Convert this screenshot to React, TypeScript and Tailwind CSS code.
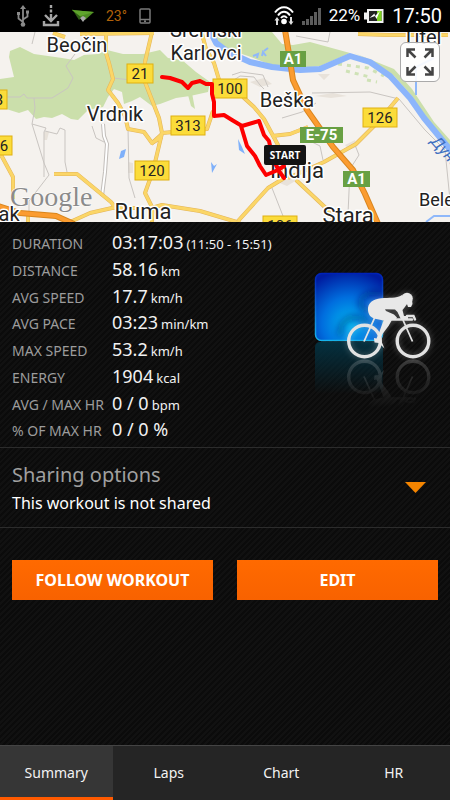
import { useState } from "react";

const STATS = [
  { label: "DURATION", value: "03:17:03", unit: "(11:50 - 15:51)" },
  { label: "DISTANCE", value: "58.16", unit: "km" },
  { label: "AVG SPEED", value: "17.7", unit: "km/h" },
  { label: "AVG PACE", value: "03:23", unit: "min/km" },
  { label: "MAX SPEED", value: "53.2", unit: "km/h" },
  { label: "ENERGY", value: "1904", unit: "kcal" },
  { label: "AVG / MAX HR", value: "0 / 0", unit: "bpm" },
  { label: "% OF MAX HR", value: "0 / 0 %", unit: "" },
];

const TABS = ["Summary", "Laps", "Chart", "HR"];

const PLACES = [
  { name: "Beočin", x: 77, y: 52 },
  { name: "Sremski", x: 206, y: 37 },
  { name: "Karlovci", x: 206, y: 60 },
  { name: "Vrdnik", x: 115, y: 121 },
  { name: "Beška", x: 287, y: 107 },
  { name: "Titel", x: 422, y: 44 },
  { name: "ak", x: 9, y: 221 },
];

const TOWNS = [
  { name: "Inđija", x: 297, y: 178 },
  { name: "Ruma", x: 143, y: 219 },
  { name: "Stara", x: 348, y: 223 },
];

const ROADS = [
  { no: "21", x: 127, y: 64, w: 26 },
  { no: "100", x: 213, y: 79, w: 34 },
  { no: "313", x: 171, y: 116, w: 34 },
  { no: "120", x: 135, y: 161, w: 34 },
  { no: "126", x: 363, y: 108, w: 34 },
  { no: "106", x: 263, y: 216, w: 34 },
  { no: "3", x: -20, y: 90, w: 27 },
  { no: "6", x: -20, y: 136, w: 32 },
];

const MOTORWAYS = [
  { no: "A1", x: 280, y: 51, w: 26 },
  { no: "E-75", x: 300, y: 127, w: 43 },
  { no: "A1", x: 343, y: 171, w: 27 },
];

function StatusBar() {
  return (
    <header className="flex h-8 items-center justify-between bg-black pl-4 pr-2 font-['Roboto',sans-serif] text-white">
      <div className="flex items-center gap-3">
        {/* usb */}
        <svg width="14" height="24" viewBox="0 0 14 24" fill="none" stroke="#8a8a8a" strokeWidth="1.8">
          <path d="M7 3v17M7 18L2.500 14.500V9M7 15.500l4.500-3V8" />
          <path d="M7 1l3 4H4zM1 8h3v3H1zM10 6.500h3v3h-3z" fill="#8a8a8a" stroke="none" />
          <circle cx="7" cy="20.500" r="2.300" fill="#8a8a8a" stroke="none" />
        </svg>
        {/* download */}
        <svg width="18" height="22" viewBox="0 0 18 22" fill="none" stroke="#a6a6a6" strokeWidth="2.400">
          <path d="M9 0v3M9 4.500v3M9 9v7M3 10l6 6 6-6M2 16v4h14v-4" />
        </svg>
        {/* paper plane */}
        <svg width="22" height="14" viewBox="0 0 22 14">
          <path d="M0 0l7 11 4-4z" fill="#2f5f14" />
          <path d="M0 1l22 2-9 8z" fill="#4d8a22" />
          <path d="M0 1l22 2-14 4z" fill="#5fa42c" />
          <path d="M8 9l3-2 3 2-3 4z" fill="#a8a8a8" />
        </svg>
        <span className="text-sm text-[#b0620a]">23°</span>
        <svg width="12" height="16" viewBox="0 0 12 16" fill="none" stroke="#7a7a7a" strokeWidth="1.500">
          <rect x="1" y="1" width="10" height="14" rx="1" />
          <path d="M1 11.500h10M5 13.300h2" />
        </svg>
      </div>
      <div className="flex items-center gap-2">
        {/* wifi */}
        <svg width="20" height="20" viewBox="0 0 20 20" fill="none" stroke="#fff" strokeWidth="2">
          <path d="M1 6.500C6-.500 14-.500 19 6.500M4 9.500c3.500-5 8.500-5 12 0M7 12c2-2.500 4-2.500 6 0" />
          <circle cx="10" cy="15.500" r="2.800" fill="#fff" stroke="none" />
          <path d="M3 11l2.500 3.500H4V19H2v-4.500H.500zM17 19l-2.500-3.500H16V11h2v4.500h1.500z" fill="#ddd" stroke="none" />
        </svg>
        {/* signal */}
        <svg width="19" height="17" viewBox="0 0 19 17" fill="#5c5c5c">
          <path d="M0 13h3v4H0zM4 11h3v6H4zM8 8h3v9H8zM12 4h3v13h-3zM16 0h3v17h-3z" />
        </svg>
        <div className="flex items-center gap-1">
          <span className="text-[17px]">22%</span>
          <svg width="20" height="14" viewBox="0 0 20 14">
            <path d="M3 0h16.500v14H3v-3.500H0v-7h3z" fill="#f2f2f2" />
            <rect x="5" y="2" width="12.500" height="10" fill="#222" />
            <rect x="13" y="2" width="4.500" height="10" fill="#7ed321" />
            <path d="M5.500 9l5-4.500.5 2.500 5-5-3.500 8-1.500-3z" fill="#fff" />
          </svg>
        </div>
        <span className="text-xl">17:50</span>
      </div>
    </header>
  );
}

function RouteMap() {
  return (
    <div className="relative">
      <svg className="block w-full" viewBox="0 32 450 190" role="img" aria-label="Route map">
        <rect y="32" width="450" height="190" fill="#f5f2ee" />

        {/* forests */}
        <g fill="#cbdfab">
          <path d="M10 51l10-4 14 7 14 2 14 2 12 2 10-5 14-1 9-4 16 4 20 0 17-4 8 8 14 2 14 12 14 10-2 10-18 4-14 2-16 6-8 2-12-9-8 4-8 3-2-12-8-3-6 8-5 10-15 3-10 10-7-1-9-5-10 4-8-1-8 2-8-9-9 3-25-8V80l20-3-5-20z" />
          <path d="M206 32h66l10 12 11 1 17-3 40 11-16 7-14 6-20 2-26-2-26-10-24-8z" />
          <path d="M354 53l40 16 18 20 22 33 16 18v14l-14-20-24-38-18-20-20-14z" />
          <path d="M188 95l4-2 3 16-4-3z" />
        </g>
        <g fill="none" stroke="#cfe2b6" strokeWidth="3" strokeDasharray="4 5">
          <path d="M338 64l30 4 16 8M346 71l24 6M367 80l10 2" />
        </g>
        <g fill="#e8e2da">
          <path d="M44 132h5l-2 8h-3zM315 96l18-3 14 3-16 2zM318 74l12 0-6 6zM285 175l12 5-10 6-10-4zM128 162l5 1v10h-5zM345 145l10-5 2 7-8 3zM250 82l14-4 8 6-12 3z" />
        </g>

        {/* water */}
        <path d="M210 31l6 12 12 9 22 10 22 5 28 3 20-1 30-13 20 6 20 14 20 22 14 20 14 17 14 17" fill="none" stroke="#8cb5fb" strokeWidth="6" strokeLinejoin="round" />
        <path d="M416 95v-28l18-9M426 222l8-6h18v-4M253 56l5-2-1 4M262 56l1-4 3 4M268 48l-4 3" fill="none" stroke="#8fb8fa" strokeWidth="2" />
        <path d="M121 151l5-2-2 8-5 2zM238 139l4 8 3 7-6-4zM211 162l3 4 3-2-5 9z" fill="#7eb0fa" />

        {/* minor roads */}
        <g fill="none" stroke="#c9c5c1" strokeWidth="1">
          <path d="M0 97h20l4-3 3 4 25 0 16-10 5-10-7-12 9-12M34 98l1 10-3 16 12 39 5 12-20 26v22M32 124l14 4-2 4v45M45 131l12 3 3-6 5 2v32l2 10M92 126l4 12 8 4M128 128l1 50 6 20M35 32l-3 12M112 78l20 2M312 93l58-1 29 7 26 31 20 20 5 50" />
          <path d="M228 84l12-8 14 1 6 8 4 4M282 118l20-6 14-9M355 145l4 10-9 14-2 45M272 188l11 28M296 36l32 6 2-10M308 140l12 6 3 14M232 75l9-3 22 3 5 12" />
        </g>
        <g fill="none">
          <path d="M103 124l1 12 3 8-2 28-3 24" stroke="#c2beba" strokeWidth="4" />
          <path d="M103 124l1 12 3 8-2 28-3 24" stroke="#fff" strokeWidth="2" />
        </g>

        {/* main roads, casing first */}
        {[
          { color: "#e3b55a", width: 4 },
          { color: "#fbd667", width: 3 },
        ].map((pass) => (
          <g key={pass.color} fill="none" stroke={pass.color} strokeWidth={pass.width} strokeLinejoin="round">
            <path d="M53 33l12 4M80 34l74-1M106 33v20l3 10 4 16-5 11 10 13 7 13 3 13 16 3 8 11 10-6" />
            <path d="M152 32l-7 30 0 20 14 36 3 15-9 38-8 22 8 16-2 22" />
            <path d="M162 133l45-4 6-18M162 134l-11 10" />
            <path d="M202 34l4 15 8 14 6 20M243 97l11 10 10 12 14 26 8 32-18 11-30 33" />
            <path d="M272 136l18-2 18-7" />
            <path d="M288 178l36-16 32-18 22-22 20-24M296 180l32 30 8 14" />
            <path d="M54 174h23l34 28 8 10M70 222l20-9 22-5 28 0M148 209l14-4 38 6 40 12" />
            <path d="M0 153l13 24v22M358 34l30 1h60M28 214v8" />
          </g>
        ))}
        <path d="M-2 206l22 7 36 3 18 8M284 24l5 30 4 26 14 30 26 37 20 23 12 24 14 32" fill="none" stroke="#d9861e" strokeWidth="6" />
        <path d="M-2 206l22 7 36 3 18 8M284 24l5 30 4 26 14 30 26 37 20 23 12 24 14 32" fill="none" stroke="#fb9c30" strokeWidth="4" />

        <text x="10" y="206" className="font-['Liberation_Serif',serif] text-[28px]" fill="#8b8b8b" stroke="#fff" strokeWidth="1" paintOrder="stroke">
          Google
        </text>

        {/* road signs */}
        <g className="font-['Roboto',sans-serif] text-[15px]" textAnchor="middle">
          {ROADS.map((r) => (
            <g key={r.no}>
              <rect x={r.x} y={r.y} width={r.w} height="19" fill="#fbdc3a" stroke="#e0b010" />
              <text x={r.x < 0 ? r.x + r.w - 8 : r.x + r.w / 2} y={r.y + 15} fill="#222">
                {r.no}
              </text>
            </g>
          ))}
        </g>
        <g className="font-['Roboto',sans-serif] text-[15px] font-bold" textAnchor="middle">
          {MOTORWAYS.map((m) => (
            <g key={m.x}>
              <rect x={m.x} y={m.y} width={m.w} height="16" fill="#68a043" />
              <text x={m.x + m.w / 2} y={m.y + 13} fill="#fff">
                {m.no}
              </text>
            </g>
          ))}
        </g>

        {/* place names */}
        <g className="font-['Roboto',sans-serif]" textAnchor="middle" fill="#222" stroke="#fff" strokeWidth="3" strokeLinejoin="round" paintOrder="stroke">
          {PLACES.map((p) => (
            <text key={p.name} x={p.x} y={p.y} className="text-[20px]">
              {p.name}
            </text>
          ))}
          {TOWNS.map((p) => (
            <text key={p.name} x={p.x} y={p.y} className="text-[22px]">
              {p.name}
            </text>
          ))}
          <text x="419" y="206" textAnchor="start" className="text-[18px]">
            Belegiš
          </text>
        </g>
        <text className="font-['Roboto',sans-serif] text-base italic" fill="#3f6fc0" transform="translate(430 142) rotate(48)">
          Дунав
        </text>

        {/* route */}
        <path
          d="M162 77l8 1 12 4 6 6 4-5 8-2 6 3 6 0v10l2 8v14l10-1 8 5 10 6 17-5 5 14 5 6 4 18 6 12 5 7M241 126l6 20 8 10 5 10 6 9 12-5 6-4"
          fill="none"
          stroke="#fd0000"
          strokeWidth="4"
          strokeLinejoin="round"
          strokeLinecap="round"
        />
        <rect x="264" y="145" width="42" height="20" rx="2" fill="#141414" />
        <text x="285" y="159" textAnchor="middle" className="font-['Open_Sans',sans-serif] text-[10px] font-bold" fill="#fff">
          START
        </text>
      </svg>
      <button
        aria-label="Full screen"
        className="absolute right-2.5 top-2.5 flex size-10 items-center justify-center rounded-md border border-[#aaa] bg-white/90"
      >
        <svg width="28" height="28" viewBox="0 0 28 28" fill="none" stroke="#444" strokeWidth="2.500">
          <path d="M1.500 9V1.500H9M1.500 1.500l8 8M19 1.500h7.500V9M26.500 1.500l-8 8M1.500 19v7.500H9M1.500 26.500l8-8M26.500 19v7.500H19M26.500 26.500l-8-8" />
        </svg>
      </button>
    </div>
  );
}

function Cyclist() {
  return (
    <g>
      <g fill="none" stroke="#e2e2e2">
        <circle cx="64.500" cy="81" r="15.800" strokeWidth="3.400" />
        <circle cx="113" cy="81" r="15.800" strokeWidth="3.400" />
        <path d="M64 81.500L75 57M112.500 81.500L103 60" strokeWidth="1.800" />
        <path d="M92 59.500h20M107 56h6.500l1.500 3.500" strokeWidth="2.400" strokeLinecap="round" />
      </g>
      <circle cx="107" cy="38.500" r="5.800" fill="#e8e8e8" />
      <path d="M107 44l5-4 .500 4-1.500 3h-3z" fill="#e8e8e8" />
      <path
        fill="#e8e8e8"
        d="M68 50C67.500 43 73 39 81 38.200C89 37.500 96 38.600 102 35L107 44L104.500 47.500L102.500 50L104 56L108 56V59.500H101L97.500 52L95 49.500L85 49.200L86 51L94 54.500L97 57.500L95.500 60H92L88.500 66L82.500 74L80.500 79L84.500 88.500L79 83L74.500 82.500L74 78L76.500 78.500L79.500 71.500L83.500 60.500L74 58.500C70 57 68.300 54 68 50z"
      />
    </g>
  );
}

function SportBadge() {
  return (
    <svg width="150" height="150" viewBox="0 0 150 150" role="img" aria-label="Cycling">
      <defs>
        <radialGradient id="tile" cx="0.5" cy="0.75" r="0.8">
          <stop offset="0" stopColor="#00b4f0" />
          <stop offset="0.5" stopColor="#006ede" />
          <stop offset="1" stopColor="#001ca0" />
        </radialGradient>
        <linearGradient id="edge" x1="0" y1="0" x2="0" y2="1">
          <stop offset="0" stopColor="#0022b8" />
          <stop offset="1" stopColor="#16b4ec" />
        </linearGradient>
        <linearGradient id="mirror" x1="0" y1="0" x2="0" y2="1">
          <stop offset="0" stopColor="#04303f" />
          <stop offset="1" stopColor="#04303f" stopOpacity="0" />
        </linearGradient>
        <linearGradient id="fade" x1="0" y1="0" x2="0" y2="1">
          <stop offset="0.5" stopColor="#000" />
          <stop offset="1" stopColor="#fff" />
        </linearGradient>
        <mask id="fadeMask" maskUnits="userSpaceOnUse" x="0" y="0" width="150" height="99">
          <rect width="150" height="99" fill="url(#fade)" />
        </mask>
        <filter id="glow" x="-20%" y="-20%" width="140%" height="140%">
          <feGaussianBlur stdDeviation="3" />
        </filter>
      </defs>
      <rect x="15" y="82" width="68" height="52" rx="5" fill="url(#mirror)" />
      <rect x="15.500" y="13.500" width="67" height="67" rx="6" fill="url(#tile)" stroke="url(#edge)" strokeWidth="1.500" />
      <g fill="none" stroke="#001c60" strokeOpacity="0.450" strokeWidth="5" filter="url(#glow)">
        <path d="M81 34c-16-4-26 8-18 14l18 6M40 76c-2-20 20-24 28-12" />
      </g>
      <g opacity="0.200" transform="translate(0 198) scale(1 -1)" mask="url(#fadeMask)">
        <Cyclist />
      </g>
      <g opacity="0.350" filter="url(#glow)">
        <Cyclist />
      </g>
      <Cyclist />
    </svg>
  );
}

export default function App() {
  const [tab, setTab] = useState("Summary");

  return (
    <div className="flex min-h-screen flex-col bg-[#0e0e0e] bg-[repeating-linear-gradient(135deg,#0b0b0b_0px,#0b0b0b_2px,#111111_2px,#111111_4px)] font-['Noto_Sans',sans-serif] text-[#f2f2f2]">
      <StatusBar />
      <RouteMap />

      <section className="flex items-start justify-between border-b border-[#2c2c2c] pb-[3px] pl-3 pt-2">
        <dl className="grid min-h-[214px] auto-rows-fr">
          {STATS.map((s) => (
            <div key={s.label} className="flex items-baseline">
              <dt className="w-[100px] whitespace-nowrap text-sm text-[#9c9c9c]">{s.label}</dt>
              <dd className="flex items-baseline gap-[3px] whitespace-nowrap text-lg leading-6">
                {s.value}
                {s.unit && <span className="text-[13px]">{s.unit}</span>}
              </dd>
            </div>
          ))}
        </dl>
        <div className="-ml-4 mt-[30px] shrink-0">
          <SportBadge />
        </div>
      </section>

      <button className="flex items-center justify-between border-b border-[#2c2c2c] pb-3 pl-3 pr-6 pt-[11px] text-left">
        <span className="flex flex-col">
          <span className="text-xl leading-8 text-[#a0a0a0]">Sharing options</span>
          <span className="text-base leading-6 text-white">This workout is not shared</span>
        </span>
        <svg width="21" height="11" viewBox="0 0 21 11" fill="#f58500">
          <path d="M0 0h21L10.500 11z" />
        </svg>
      </button>

      <div className="grid grid-cols-2 gap-6 px-3 pt-8 text-base font-bold text-white">
        <button className="h-10 bg-linear-to-b from-[#ff6a00] to-[#f86200]">FOLLOW WORKOUT</button>
        <button className="h-10 bg-linear-to-b from-[#ff6a00] to-[#f86200]">EDIT</button>
      </div>

      <nav className="mt-auto grid grid-cols-4 border-t border-[#444] bg-[#252525]">
        {TABS.map((name) => (
          <button
            key={name}
            onClick={() => setTab(name)}
            className={`border-b-3 pb-3 pt-[15px] text-sm leading-6 ${
              tab === name ? "border-[#ff5a00] bg-[#363636]" : "border-transparent"
            }`}
          >
            {name}
          </button>
        ))}
      </nav>
    </div>
  );
}
